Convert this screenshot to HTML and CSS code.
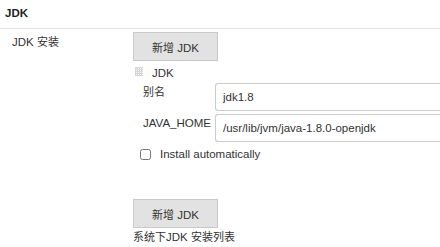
FILE: index.html
```html
<!DOCTYPE html>
<html>
<head>
<meta charset="utf-8">
<link rel="stylesheet" href="styles.css">
</head>
<body>
<div class="section-header">JDK</div>
<div class="row">
  <div class="row-label">JDK <span class="cjk">安装</span></div>
  <div class="row-body">
    <button class="btn"><span class="cjk">新增</span> JDK</button>
    <div class="repeated">
      <div class="chunk-head">
        <span class="grip"></span>
        <span class="chunk-title">JDK</span>
      </div>
      <div class="fields">
        <div class="field">
          <label class="field-label cjk">别名</label>
          <input class="text-input" type="text" value="jdk1.8">
        </div>
        <div class="field">
          <label class="field-label">JAVA_HOME</label>
          <input class="text-input" type="text" value="/usr/lib/jvm/java-1.8.0-openjdk">
        </div>
      </div>
      <label class="check">
        <input class="check-box" type="checkbox">
        <span>Install automatically</span>
      </label>
    </div>
    <button class="btn btn-bottom"><span class="cjk">新增</span> JDK</button>
    <div class="desc"><span class="cjk">系统下</span>JDK <span class="cjk">安装列表</span></div>
  </div>
</div>
</body>
</html>
```

FILE: styles.css
```css
html, body {
  margin: 0;
  padding: 0;
  overflow: hidden;
  background: #ffffff;
}
body {
  font-family: "Liberation Sans", Arial, "Noto Sans CJK SC", sans-serif;
  font-size: 11.5px;
  line-height: 16px;
  color: #333333;
  width: 440px;
  height: 247px;
}
.cjk {
  font-size: 11px;
}
.section-header {
  font-weight: bold;
  padding: 5px 5px 7px;
  border-bottom: 1px solid #e3e3e3;
  color: #222;
}
.row {
  display: flex;
  align-items: flex-start;
}
.row-label {
  width: 121px;
  padding: 5px 0 0 12px;
  flex: none;
}
.row-body {
  padding-top: 3px;
  display: flex;
  flex-direction: column;
  align-items: flex-start;
  flex: 1;
  min-width: 0;
}
.btn {
  font-family: "Liberation Sans", Arial, "Noto Sans CJK SC", sans-serif;
  font-size: 11.5px;
  color: #333;
  background: #e2e2e2;
  border: 1px solid #c9c9c9;
  border-radius: 0;
  width: 85px;
  height: 29px;
  padding: 0;
  margin: 0;
}
.repeated {
  margin-top: 4px;
  display: flex;
  flex-direction: column;
  align-self: stretch;
}
.chunk-head {
  display: flex;
  align-items: flex-start;
  gap: 10px;
  padding-left: 2px;
}
.grip {
  display: block;
  width: 8px;
  height: 9px;
  margin-top: 2px;
  margin-right: -1px;
  background-color: #f4f4f4;
  background-image:
    repeating-linear-gradient(to right, #d6d6d6 0 1px, transparent 1px 2px),
    repeating-linear-gradient(to bottom, #d6d6d6 0 1px, transparent 1px 2px);
}
.fields {
  margin-top: 2px;
  padding-left: 10px;
  display: flex;
  flex-direction: column;
  gap: 3px;
}
.field {
  display: flex;
  align-items: flex-start;
}
.field-label {
  width: 72px;
  flex: none;
  padding-top: 1px;
}
.text-input {
  flex: 1;
  min-width: 0;
  height: 28px;
  box-sizing: border-box;
  border: 1px solid #cccccc;
  border-right: none;
  border-radius: 3px 0 0 3px;
  padding: 0 7px;
  margin: 0;
  font-family: "Liberation Sans", Arial, sans-serif;
  font-size: 11.5px;
  color: #333;
}
.check {
  margin-top: 4px;
  padding-left: 7px;
  display: flex;
  align-items: center;
  gap: 9px;
}
.check-box {
  width: 11px;
  height: 11px;
  margin: 0;
}
.btn-bottom {
  margin-top: 37px;
}
.desc {
  margin-top: 1px;
}
```
